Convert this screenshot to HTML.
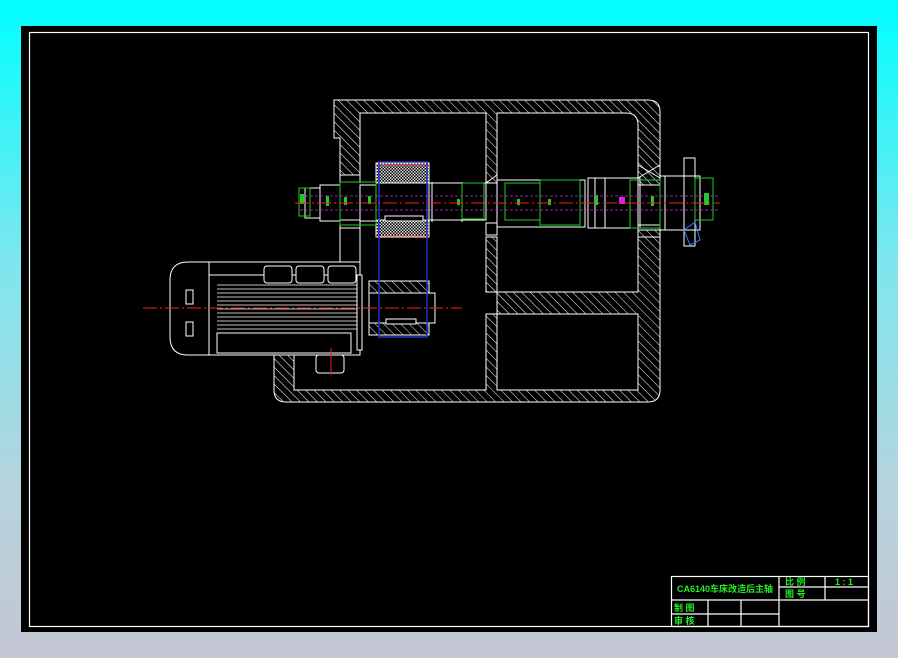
<!DOCTYPE html>
<html><head><meta charset="utf-8"><style>
html,body{margin:0;padding:0;width:898px;height:658px;overflow:hidden;background:linear-gradient(#00ffff 0%,#7fe6ee 40%,#b6d3dc 75%,#c4c6d3 100%);}
svg{position:absolute;left:0;top:0}
</style></head><body>
<svg width="898" height="658" viewBox="0 0 898 658" xmlns="http://www.w3.org/2000/svg">
<defs>
<pattern id="h" width="6" height="6" patternUnits="userSpaceOnUse" patternTransform="rotate(-45)">
<rect width="6" height="6" fill="#000"/><line x1="0" y1="0" x2="0" y2="6" stroke="#fff" stroke-width="1"/></pattern>
<pattern id="c" width="3" height="3" patternUnits="userSpaceOnUse"><rect width="3" height="3" fill="#000"/><rect width="1.5" height="1.5" fill="#ddd"/><rect x="1.5" y="1.5" width="1.5" height="1.5" fill="#ddd"/></pattern>
</defs>
<rect x="21" y="26" width="856" height="606" fill="#000"/>
<rect x="29.5" y="32.5" width="839" height="594" fill="none" stroke="#fff" stroke-width="1.2"/>
<!-- housing -->
<g stroke="#fff" stroke-width="1" fill="url(#h)">
<path d="M334 100 H648 Q660 100 660 112 V390 Q660 402 648 402 H286 Q274 402 274 390 V355 H294 V390 H486 V314 H497 V390 H638 V314 H497 V292 H638 V125 Q638 113 626 113 H497 V183 H486 V113 H360 V175 H340 V138 H334 Z"/>
<path d="M486 237 H497 V292 H486 Z"/>
<path d="M638 185 H660 V230 H638 Z" fill="#000"/>
</g>
<g stroke="#fff" fill="none" stroke-width="1">
<path d="M340 175 V183 M360 175 V183 M340 220 V262 M360 220 V262"/>
<rect x="340" y="220" width="20" height="8"/>
<rect x="486" y="223" width="11" height="12"/>
<rect x="638" y="225" width="22" height="12"/>
<path d="M638 165 L660 178 M660 165 L638 178 M486 183 L497 175"/>
</g>
<!-- gear -->
<rect x="376" y="163" width="53" height="74" fill="url(#c)" stroke="#fff"/>
<rect x="376" y="183" width="53" height="37" fill="#000" stroke="#fff"/>
<rect x="385" y="216" width="38" height="5" fill="#000" stroke="#fff"/>
<line x1="376" y1="165" x2="429" y2="165" stroke="#e33"/>
<line x1="376" y1="236" x2="429" y2="236" stroke="#e33"/>
<rect x="369" y="281" width="60" height="54" fill="url(#h)" stroke="#fff"/>
<rect x="369" y="293" width="66" height="30" fill="#000" stroke="#fff"/>
<rect x="386" y="319" width="30" height="5" fill="#000" stroke="#fff"/>
<rect x="379" y="162" width="48" height="175" fill="none" stroke="#23c" stroke-width="1.5"/>
<!-- shaft -->
<g stroke="#fff" fill="none" stroke-width="1">
<path d="M305 188 H320 V218 H305 Z M320 185 H340 V221 H320 Z M360 185 H376 V221 H360 Z M429 183 H486 V220 H429 Z M497 180 H585 V227 H497 Z M588 178 H640 V228 H588 Z M660 176 H700 V230 H660 Z"/>
<path d="M432 182 V222 M462 182 V222 M595 178 V228 M605 178 V228 M665 176 V230"/>
<rect x="684" y="158" width="11" height="88"/>
</g>
<g stroke="#2c2" fill="none" stroke-width="1">
<path d="M299 188 H310 V216 H299 Z M340 182 H376 V225 H340 Z M462 183 H484 V219 H462 Z M540 180 H580 V225 H540 Z M505 183 H540 V220 H505 Z M630 180 H660 V228 H630 Z M695 178 H713 V220 H695 Z"/>
<path d="M684 230 L695 222 L700 240 L690 245 Z" stroke="#37f"/>
</g>
<g fill="#2c2" font-family="Liberation Sans" font-size="6">
<rect x="300" y="194" width="4" height="10"/><rect x="326" y="196" width="3" height="10"/><rect x="344" y="197" width="3" height="8"/><rect x="368" y="196" width="3" height="8"/><rect x="457" y="199" width="3" height="6"/><rect x="517" y="199" width="3" height="6"/><rect x="548" y="199" width="3" height="6"/><rect x="595" y="195" width="3" height="10"/><rect x="651" y="196" width="3" height="10"/><rect x="704" y="193" width="5" height="12"/>
</g>
<rect x="619" y="197" width="6" height="7" fill="#d2d"/>
<path d="M300 196 H720 M300 210 H720" stroke="#c3c" stroke-dasharray="3 2" stroke-width="0.8"/>
<line x1="295" y1="203" x2="720" y2="203" stroke="#e22" stroke-dasharray="14 3 2 3"/>
<!-- motor -->
<g stroke="#fff" fill="#000" stroke-width="1">
<path d="M188 262 H209 V355 H188 Q170 355 170 337 V280 Q170 262 188 262 Z"/>
<path d="M209 262 H360 V275 H209 Z"/>
<rect x="209" y="275" width="151" height="80"/>
<rect x="357" y="275" width="5" height="75"/>
<rect x="186" y="290" width="7" height="14"/><rect x="186" y="322" width="7" height="14"/>
<rect x="264" y="266" width="28" height="17" rx="3"/><rect x="296" y="266" width="28" height="17" rx="3"/><rect x="328" y="266" width="28" height="17" rx="3"/>
<rect x="217" y="333" width="134" height="20"/>
<rect x="316" y="355" width="28" height="18" rx="3"/>
</g>
<g stroke="#fff" stroke-width="0.7">
<path d="M217 285H357M217 289H357M217 293H357M217 297H357M217 301H357M217 305H357M217 309H357M217 313H357M217 317H357M217 321H357M217 325H357M217 329H357"/>
</g>
<line x1="143" y1="308" x2="462" y2="308" stroke="#e22" stroke-dasharray="14 3 2 3"/>
<line x1="331" y1="348" x2="331" y2="375" stroke="#e22"/>
<!-- title block -->
<g stroke="#fff" fill="none" stroke-width="1.2">
<rect x="671.5" y="576.5" width="197" height="50"/>
<path d="M671 600H868M671 614H779M779 587H868M779 576V626M741 600V626M708 600V626M825 576V600"/>
</g>
<g fill="#2e2" font-family="Liberation Sans,'Noto Sans CJK SC',sans-serif" font-size="9" font-weight="bold">
<text x="677" y="592">CA6140车床改造后主轴</text>
<text x="785" y="585">比  例</text><text x="835" y="585">1 : 1</text>
<text x="785" y="597">图  号</text>
<text x="674" y="611">制  图</text><text x="674" y="624">审  核</text>
</g>
</svg>
</body></html>
